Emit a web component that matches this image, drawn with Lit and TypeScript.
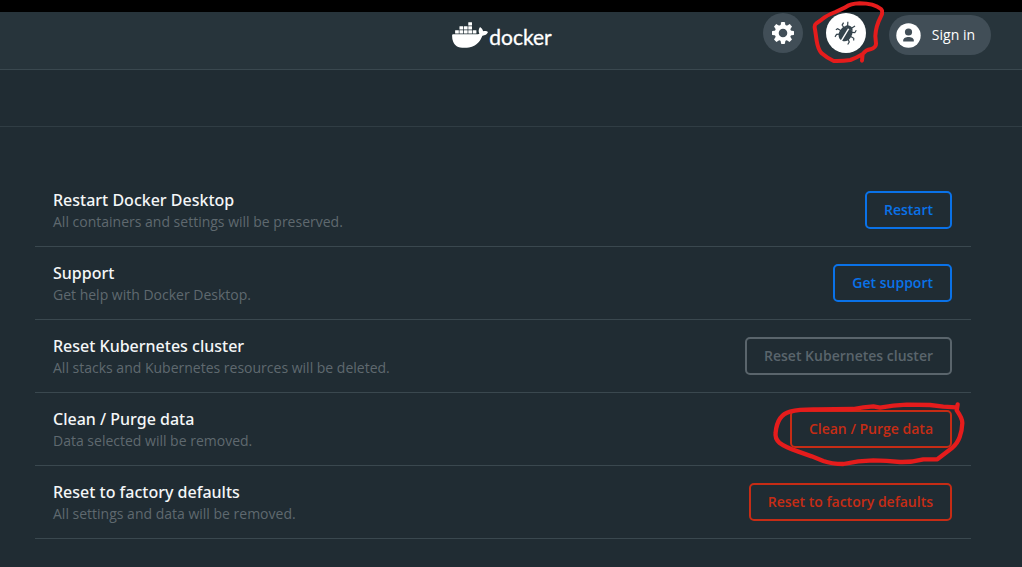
import { LitElement, html, css, svg, nothing } from "lit";
import { customElement, property } from "lit/decorators.js";

type Tone = "primary" | "danger" | "muted";

interface Action {
  title: string;
  detail: string;
  label: string;
  tone: Tone;
  marked?: boolean;
}

const ACTIONS: Action[] = [
  { title: "Restart Docker Desktop", detail: "All containers and settings will be preserved.", label: "Restart", tone: "primary" },
  { title: "Support", detail: "Get help with Docker Desktop.", label: "Get support", tone: "primary" },
  { title: "Reset Kubernetes cluster", detail: "All stacks and Kubernetes resources will be deleted.", label: "Reset Kubernetes cluster", tone: "muted" },
  { title: "Clean / Purge data", detail: "Data selected will be removed.", label: "Clean / Purge data", tone: "danger", marked: true },
  { title: "Reset to factory defaults", detail: "All settings and data will be removed.", label: "Reset to factory defaults", tone: "danger" },
];

const GEAR_TEETH = [0, 45, 90, 135, 180, 225, 270, 315];

@customElement("app-header")
export class AppHeader extends LitElement {
  static styles = css`
    :host {
      display: block;
      background: #27343b;
      border-top: 12px solid #000;
      border-bottom: 1px solid #3a484f;
    }
    .bar {
      display: grid;
      grid-template-columns: minmax(0, 1fr) auto minmax(0, 1fr);
      align-items: start;
      min-height: 57px;
      padding: 0 31px 0 13px;
    }
    .brand {
      grid-column: 2;
      display: flex;
      gap: 1px;
      padding-top: 10px;
      color: #fff;
      text-decoration: none;
    }
    .whale {
      width: 36px;
      height: 26px;
    }
    .word {
      font: 400 21px/30px Lato, sans-serif;
      -webkit-text-stroke: 0.3px currentColor;
    }
    .tools {
      display: flex;
      justify-content: flex-end;
      gap: 23px;
      padding-top: 1px;
    }
    button {
      font: inherit;
      border: 0;
      padding: 0;
      color: #fff;
      cursor: pointer;
    }
    .round {
      position: relative;
      flex: none;
      width: 40px;
      height: 40px;
      border-radius: 50%;
      background: #414e57;
    }
    .round.active {
      background: #fff;
      color: #35444d;
    }
    .icon {
      display: block;
      width: 24px;
      height: 24px;
      margin: auto;
    }
    .mark {
      position: absolute;
      left: -16px;
      top: -13px;
      width: 74px;
      height: 65px;
      pointer-events: none;
    }
    .account {
      display: flex;
      flex: none;
      align-items: center;
      gap: 11px;
      height: 40px;
      margin-top: 2px;
      padding: 0 16px 0 7px;
      border-radius: 20px;
      background: #414e57;
      font: 500 14px/20px "Open Sans", sans-serif;
      white-space: nowrap;
    }
    .avatar {
      width: 25px;
      height: 25px;
    }
  `;

  render() {
    return html`
      <header class="bar">
        <a class="brand" href="#home" aria-label="docker">
          <svg class="whale" viewBox="0 3.3 24 17.4" fill="currentColor" aria-hidden="true">
            <path d="M13.983 11.078h2.119a.186.186 0 00.186-.185V9.006a.186.186 0 00-.186-.186h-2.119a.185.185 0 00-.185.185v1.888c0 .102.083.185.185.185m-2.954-5.43h2.118a.186.186 0 00.186-.186V3.574a.186.186 0 00-.186-.185h-2.118a.185.185 0 00-.185.185v1.888c0 .102.082.185.185.185m0 2.716h2.118a.187.187 0 00.186-.186V6.29a.186.186 0 00-.186-.185h-2.118a.185.185 0 00-.185.185v1.887c0 .102.082.185.185.186m-2.93 0h2.12a.186.186 0 00.184-.186V6.29a.185.185 0 00-.185-.185H8.1a.185.185 0 00-.185.185v1.887c0 .102.083.185.185.186m-2.964 0h2.119a.186.186 0 00.185-.186V6.29a.185.185 0 00-.185-.185H5.136a.186.186 0 00-.186.185v1.887c0 .102.084.185.186.186m5.893 2.715h2.118a.186.186 0 00.186-.185V9.006a.186.186 0 00-.186-.186h-2.118a.185.185 0 00-.185.185v1.888c0 .102.082.185.185.185m-2.93 0h2.12a.185.185 0 00.184-.185V9.006a.185.185 0 00-.184-.186h-2.12a.185.185 0 00-.184.185v1.888c0 .102.083.185.185.185m-2.964 0h2.119a.185.185 0 00.185-.185V9.006a.185.185 0 00-.184-.186h-2.12a.186.186 0 00-.186.186v1.887c0 .102.084.185.186.185m-2.92 0h2.12a.185.185 0 00.184-.185V9.006a.185.185 0 00-.184-.186h-2.12a.185.185 0 00-.184.185v1.888c0 .102.082.185.185.185M23.763 9.89c-.065-.051-.672-.51-1.954-.51-.338.001-.676.03-1.01.087-.248-1.7-1.653-2.53-1.716-2.566l-.344-.199-.226.327c-.284.438-.49.922-.612 1.43-.23.97-.09 1.882.403 2.661-.595.332-1.55.413-1.744.42H.751a.751.751 0 00-.75.748 11.376 11.376 0 00.692 4.062c.545 1.428 1.355 2.48 2.41 3.124 1.18.723 3.1 1.137 5.275 1.137.983.003 1.963-.086 2.93-.266a12.248 12.248 0 003.823-1.389c.98-.567 1.86-1.288 2.61-2.136 1.252-1.418 1.998-2.997 2.553-4.4h.221c1.372 0 2.215-.549 2.68-1.009.309-.293.55-.65.707-1.046l.098-.288Z" />
          </svg>
          <span class="word">docker</span>
        </a>
        <nav class="tools">
          <button class="round" aria-label="Settings">
            <svg class="icon" viewBox="-12 -12 24 24" fill="currentColor">
              ${GEAR_TEETH.map((a) => svg`<path transform="rotate(${a})" d="M-2.6-7 L-1.9-10.6 Q-1.8-11 -1.4-11 H1.4 Q1.8-11 1.9-10.6 L2.6-7Z" />`)}
              <circle r="6.3" fill="none" stroke="currentColor" stroke-width="4" />
            </svg>
          </button>
          <button class="round active" aria-label="Troubleshoot">
            <svg class="icon" viewBox="-12 -12 24 24">
              <g transform="rotate(31)" fill="none" stroke="currentColor" stroke-width="1.2">
                <path d="M-4.6-3.6 L-7.4-4.8 V-7.6 M-5.4 0.6 H-9.4 L-10.4 2.4 M-4.6 4 L-7.4 6 V9 M4.6-3.6 L7.4-4.8 V-7.6 M5.4 0.6 H9.4 L10.4 2.4 M4.6 4 L7.4 6 V9 M-2.2-6.8 L-4.2-10.6 M2.2-6.8 L4.2-10.6" />
                <path fill="currentColor" stroke="none" d="M-4.4-5 A4.5 4 0 0 1 4.4-5Z" />
                <path fill="currentColor" stroke="none" d="M-.7-5.2 V8.6 C-4.2 8.3-6.4 5-6.4 1.2 Q-6.4-3-4.4-5.2Z M.7-5.2 V8.6 C4.2 8.3 6.4 5 6.4 1.2 Q6.4-3 4.4-5.2Z" />
              </g>
            </svg>
            <svg class="mark" viewBox="179 0 222 195" fill="none" stroke="#e51c1c" stroke-width="12" stroke-linecap="round" stroke-linejoin="round" aria-hidden="true">
              <path d="M335 182 L337 162 Q348 149 360 148 Q378 143 377 130 L375 108 C376 88 382 68 391 51 Q400 36 392 27 C378 16 350 10 328 10 Q300 11 285 22 L255 36 Q229 46 215 58 L197 71 Q191 75 194 88 L199 122 Q203 148 214 160 Q230 174 250 183 Q276 184 300 180 Q319 173 335 163" />
            </svg>
          </button>
          <button class="account">
            <svg class="avatar" viewBox="0 0 25 25" aria-hidden="true">
              <circle cx="12.5" cy="12.5" r="12.2" fill="#fff" />
              <circle cx="12.5" cy="9" r="3.6" fill="#414e57" />
              <path fill="#414e57" d="M7.2 18.5 V17.4 C7.2 15.2 10 14 12.5 14 S17.8 15.2 17.8 17.4 V18.5Z" />
            </svg>
            Sign in
          </button>
        </nav>
      </header>
    `;
  }
}

@customElement("action-row")
export class ActionRow extends LitElement {
  @property({ attribute: false }) action!: Action;

  static styles = css`
    :host {
      display: flex;
      align-items: center;
      justify-content: space-between;
      gap: 24px;
      min-height: 72px;
      padding: 0 19px 0 18px;
      border-bottom: 1px solid #3a484f;
    }
    .copy {
      padding-top: 2px;
    }
    .title {
      margin: 0;
      font-family: "Noto Sans", "Open Sans", sans-serif;
      font-size: 16px;
      font-weight: 500;
      line-height: 22px;
      color: #f4f6f7;
    }
    .detail {
      margin: 0;
      font-size: 14px;
      line-height: 22px;
      color: #5f696f;
    }
    .slot {
      position: relative;
      flex: none;
    }
    .button {
      display: block;
      height: 38px;
      padding: 0 17px;
      border: 2px solid currentColor;
      border-radius: 5px;
      background: transparent;
      font: 600 14px/20px "Open Sans", sans-serif;
      cursor: pointer;
    }
    .primary {
      color: #0a72e8;
    }
    .danger {
      color: #c62c15;
    }
    .muted {
      color: #5a656c;
    }
    .mark {
      position: absolute;
      right: -15px;
      top: -10px;
      width: 195px;
      height: 68px;
      pointer-events: none;
    }
  `;

  render() {
    const { title, detail, label, tone, marked } = this.action;
    return html`
      <div class="copy">
        <h2 class="title">${title}</h2>
        <p class="detail">${detail}</p>
      </div>
      <div class="slot">
        <button class="button ${tone}" ?disabled=${tone === "muted"}>${label}</button>
        ${marked
          ? html`<svg class="mark" viewBox="126 225 585 204" fill="none" stroke="#e51c1c" stroke-width="13" stroke-linecap="round" stroke-linejoin="round" aria-hidden="true">
              <path d="M683 238 L680 256 Q697 280 697 294 Q696 318 689 336 Q682 356 665 370 L622 403 L580 403 Q545 412 510 411 Q470 406 430 406 Q385 407 340 417 Q305 417 280 408 L245 394 L205 380 Q165 366 148 353 Q134 340 137 322 Q142 270 180 260 Q210 252 260 253 L370 252 Q400 246 430 244 L450 248 Q490 241 530 239 L600 240 L640 245 L678 247" />
            </svg>`
          : nothing}
      </div>
    `;
  }
}

@customElement("app-root")
export class AppRoot extends LitElement {
  static styles = css`
    :host {
      display: block;
      min-height: 100vh;
      background: #202c33;
      font-family: "Open Sans", sans-serif;
    }
    .strip {
      height: 56px;
      border-bottom: 1px solid #303d44;
    }
    .list {
      padding: 47px 51px 28px 35px;
    }
  `;

  render() {
    return html`
      <app-header></app-header>
      <div class="strip"></div>
      <main class="list">
        ${ACTIONS.map((action) => html`<action-row .action=${action}></action-row>`)}
      </main>
    `;
  }
}
